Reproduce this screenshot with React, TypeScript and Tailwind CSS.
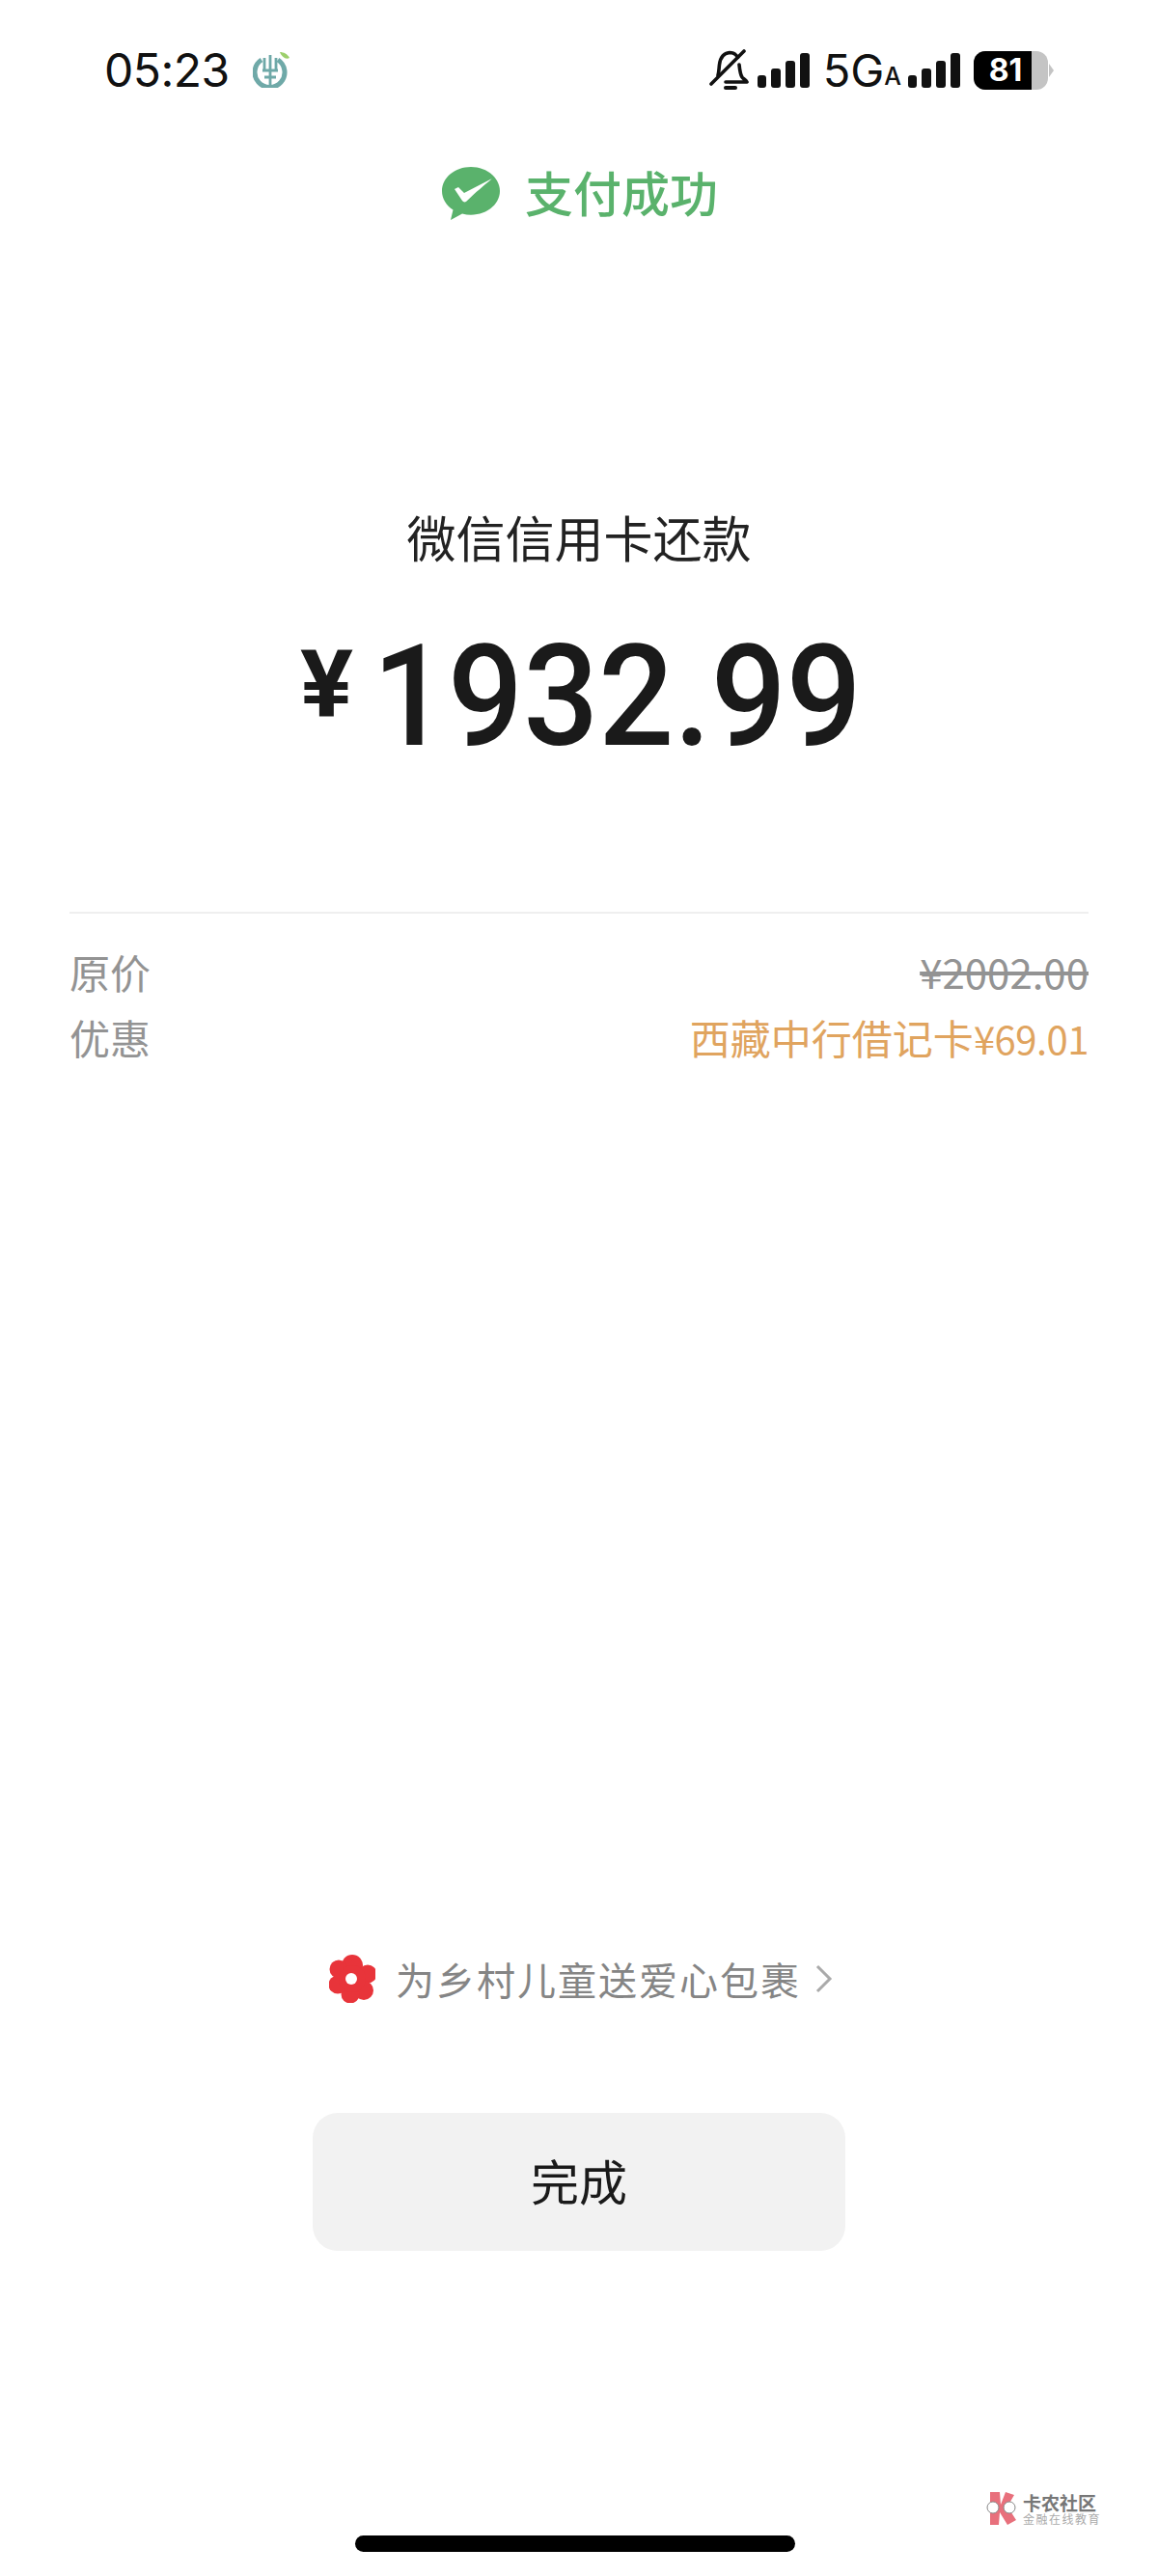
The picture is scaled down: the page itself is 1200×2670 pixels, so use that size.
const sans = "font-['Noto_Sans_CJK_SC','Noto_Sans',sans-serif]";

function BankLogo() {
  return (
    <svg width="40" height="40" viewBox="0 0 40 40" className="ml-[24px] mb-[3px]">
      <path d="M9 11a15.500 15.500 0 1 0 17 0" fill="none" stroke="#6fa9a8" strokeWidth="5" />
      <path d="M12 9v13M18 6v16M24 9v13M10 22h16M18 22v15M12 29h12" fill="none" stroke="#6fa9a8" strokeWidth="2.800" />
      <path d="M28 3c4 0 8 2 10 6-4 2-8-1-10-6z" fill="#9ccf6b" />
    </svg>
  );
}

function MutedBell() {
  return (
    <svg width="42" height="44" viewBox="0 0 42 44" fill="none" stroke="#111" strokeWidth="3.600" strokeLinecap="round" strokeLinejoin="round" className="ml-[2px]">
      <path d="M9 27c1-3 1-7 1.500-11C11.500 8 15 4 21 3.500c4 0 7 2 8.500 5" />
      <path d="M31 16c.5 5 1 10 3 13 1.500 2 4 3 5 5H17" />
      <path d="M17 40h10" strokeWidth="4" />
      <path d="M2 36 36 2" />
    </svg>
  );
}

function Bars() {
  return (
    <div className="flex items-end gap-[5px]">
      <div className="w-[9px] h-[13px] rounded-[3px] bg-[#111]" />
      <div className="w-[10px] h-[20px] rounded-[3px] bg-[#111]" />
      <div className="w-[10px] h-[28px] rounded-[3px] bg-[#111]" />
      <div className="w-[10px] h-[36px] rounded-[3px] bg-[#111]" />
    </div>
  );
}

function Battery() {
  return (
    <div className="flex items-center ml-[14px]">
      <div className="relative w-[77px] h-[40px] rounded-[12px] overflow-hidden bg-[#c4c4c4]">
        <div className="absolute inset-y-0 left-0 w-[60px] bg-black flex items-center justify-center">
          <span className="font-['Inter',sans-serif] font-bold text-[32px] leading-none text-white pl-[6px]">81</span>
        </div>
      </div>
      <div className="w-0 h-0 ml-[1px] border-y-[7px] border-y-transparent border-l-[5px] border-l-[#c4c4c4]" />
    </div>
  );
}

function WeChatCheck() {
  return (
    <svg width="62" height="58" viewBox="0 0 62 58">
      <path d="M31 1C14.500 1 1 12 1 26c0 8 4.500 15 11.500 19.500L10 56l12-6.500c3 .8 6 1.200 9 1.200 16.500 0 30-11 30-24.700S47.500 1 31 1z" fill="#5ab26c" />
      <path d="M14 24l4-2 6 6 29-15c-8 7-17 14-27 24-2 1-3 0-4-1z" fill="#fff" />
    </svg>
  );
}

function Flower() {
  return (
    <svg width="48" height="50" viewBox="0 0 48 50">
      <g fill="#e8343a">
        <circle cx="24" cy="11" r="11" />
        <circle cx="40" cy="20" r="9.500" />
        <circle cx="36" cy="37" r="10" />
        <circle cx="22" cy="41" r="9.500" />
        <circle cx="9" cy="31" r="9.500" />
        <circle cx="10" cy="15" r="9.500" />
        <circle cx="24" cy="25" r="14" />
      </g>
      <circle cx="23" cy="25" r="6" fill="#fff" />
    </svg>
  );
}

function Watermark() {
  return (
    <div className="absolute left-[1020px] top-[2582px] flex items-center gap-[4px]">
      <svg width="36" height="36" viewBox="0 0 36 36">
        <path d="M6 1h10l1 13 5-13 9 3-7 12 9 14-9 5-8-13-1 13H6z" fill="#e8707c" />
        <circle cx="9" cy="17" r="6" fill="#fff" stroke="#888" strokeWidth="1" />
        <circle cx="26" cy="17" r="6" fill="#fff" stroke="#888" strokeWidth="1" />
      </svg>
      <div className="flex flex-col">
        <span className={`${sans} text-[19px] leading-[21px] font-bold text-[#777]`}>卡农社区</span>
        <span className={`${sans} text-[12px] leading-[14px] tracking-[1.500px] text-[#aaa] whitespace-nowrap`}>金融在线教育</span>
      </div>
    </div>
  );
}

export default function App() {
  return (
    <div className={`${sans} relative h-[2670px] w-[1200px] overflow-hidden bg-white flex flex-col`}>
      {/* 状态栏 */}
      <div className="flex items-center justify-between pl-[108px] pr-[108px] pt-[46px] h-[99px]">
        <div className="flex items-center">
          <span className="font-['Inter',sans-serif] text-[48px] leading-none font-normal tracking-[-0.5px] text-[#111]">05:23</span>
          <BankLogo />
        </div>
        <div className="flex items-center">
          <MutedBell />
          <div className="ml-[8px]"><Bars /></div>
          <span className="font-['Inter',sans-serif] text-[47px] leading-none text-[#111] ml-[14px]">5G</span>
          <span className="font-['Inter',sans-serif] font-medium text-[25px] leading-none text-[#111] self-end mb-[4px] mr-[7px]">A</span>
          <Bars />
          <Battery />
        </div>
      </div>

      {/* 支付成功 */}
      <div className="flex items-center justify-center gap-[25px] mt-[72px] h-[60px] pl-[1px]">
        <WeChatCheck />
        <span className="text-[50px] leading-none font-medium text-[#5ab26c] mb-[6px]">支付成功</span>
      </div>

      {/* 金额 */}
      <p className="mt-[295px] text-center text-[51px] leading-[60px] font-normal text-[#222]">微信信用卡还款</p>
      <div className="mt-[51px] flex items-start h-[170px] pl-[311px] text-[#1a1a1a]">
        <span className="font-['Roboto',sans-serif] font-bold text-[96px] leading-[145px] w-[75px] origin-left scale-x-[1.07]">¥</span>
        <span className="font-['Roboto',sans-serif] font-medium text-[147px] leading-[170px] whitespace-nowrap origin-left scale-x-[0.935]">1932.99</span>
      </div>

      {/* 明细 */}
      <div className="mx-[72px] mt-[138px] border-t-2 border-[#efefef] pt-[26px] text-[42px] leading-[68px] font-normal">
        <div className="flex justify-between text-[#939393]">
          <span>原价</span>
          <span className="line-through">¥2002.00</span>
        </div>
        <div className="flex justify-between">
          <span className="text-[#939393]">优惠</span>
          <span className="text-[#e0a45f]">西藏中行借记卡<span className="text-[40px] tracking-[-0.5px]">¥69.01</span></span>
        </div>
      </div>

      <div className="flex-1" />

      {/* 爱心包裹 */}
      <div className="flex items-center justify-center h-[50px] pl-[5px]">
        <Flower />
        <span className="ml-[21px] text-[40px] leading-none font-normal tracking-[2px] text-[#858585]">为乡村儿童送爱心包裹</span>
        <svg width="20" height="32" viewBox="0 0 20 32" fill="none" stroke="#aaa" strokeWidth="3" className="ml-[14px]">
          <path d="M3 3l13 13L3 29" />
        </svg>
      </div>

      {/* 完成 */}
      <button className="mx-auto mt-[114px] w-[552px] h-[143px] pb-[4px] rounded-[26px] bg-[#f2f2f2] text-[50px] font-normal text-[#1a1a1a]">完成</button>

      {/* home 指示条 */}
      <div className="ml-[368px] mt-[295px] mb-[25px] w-[456px] h-[17px] rounded-full bg-black" />

      <Watermark />
    </div>
  );
}
